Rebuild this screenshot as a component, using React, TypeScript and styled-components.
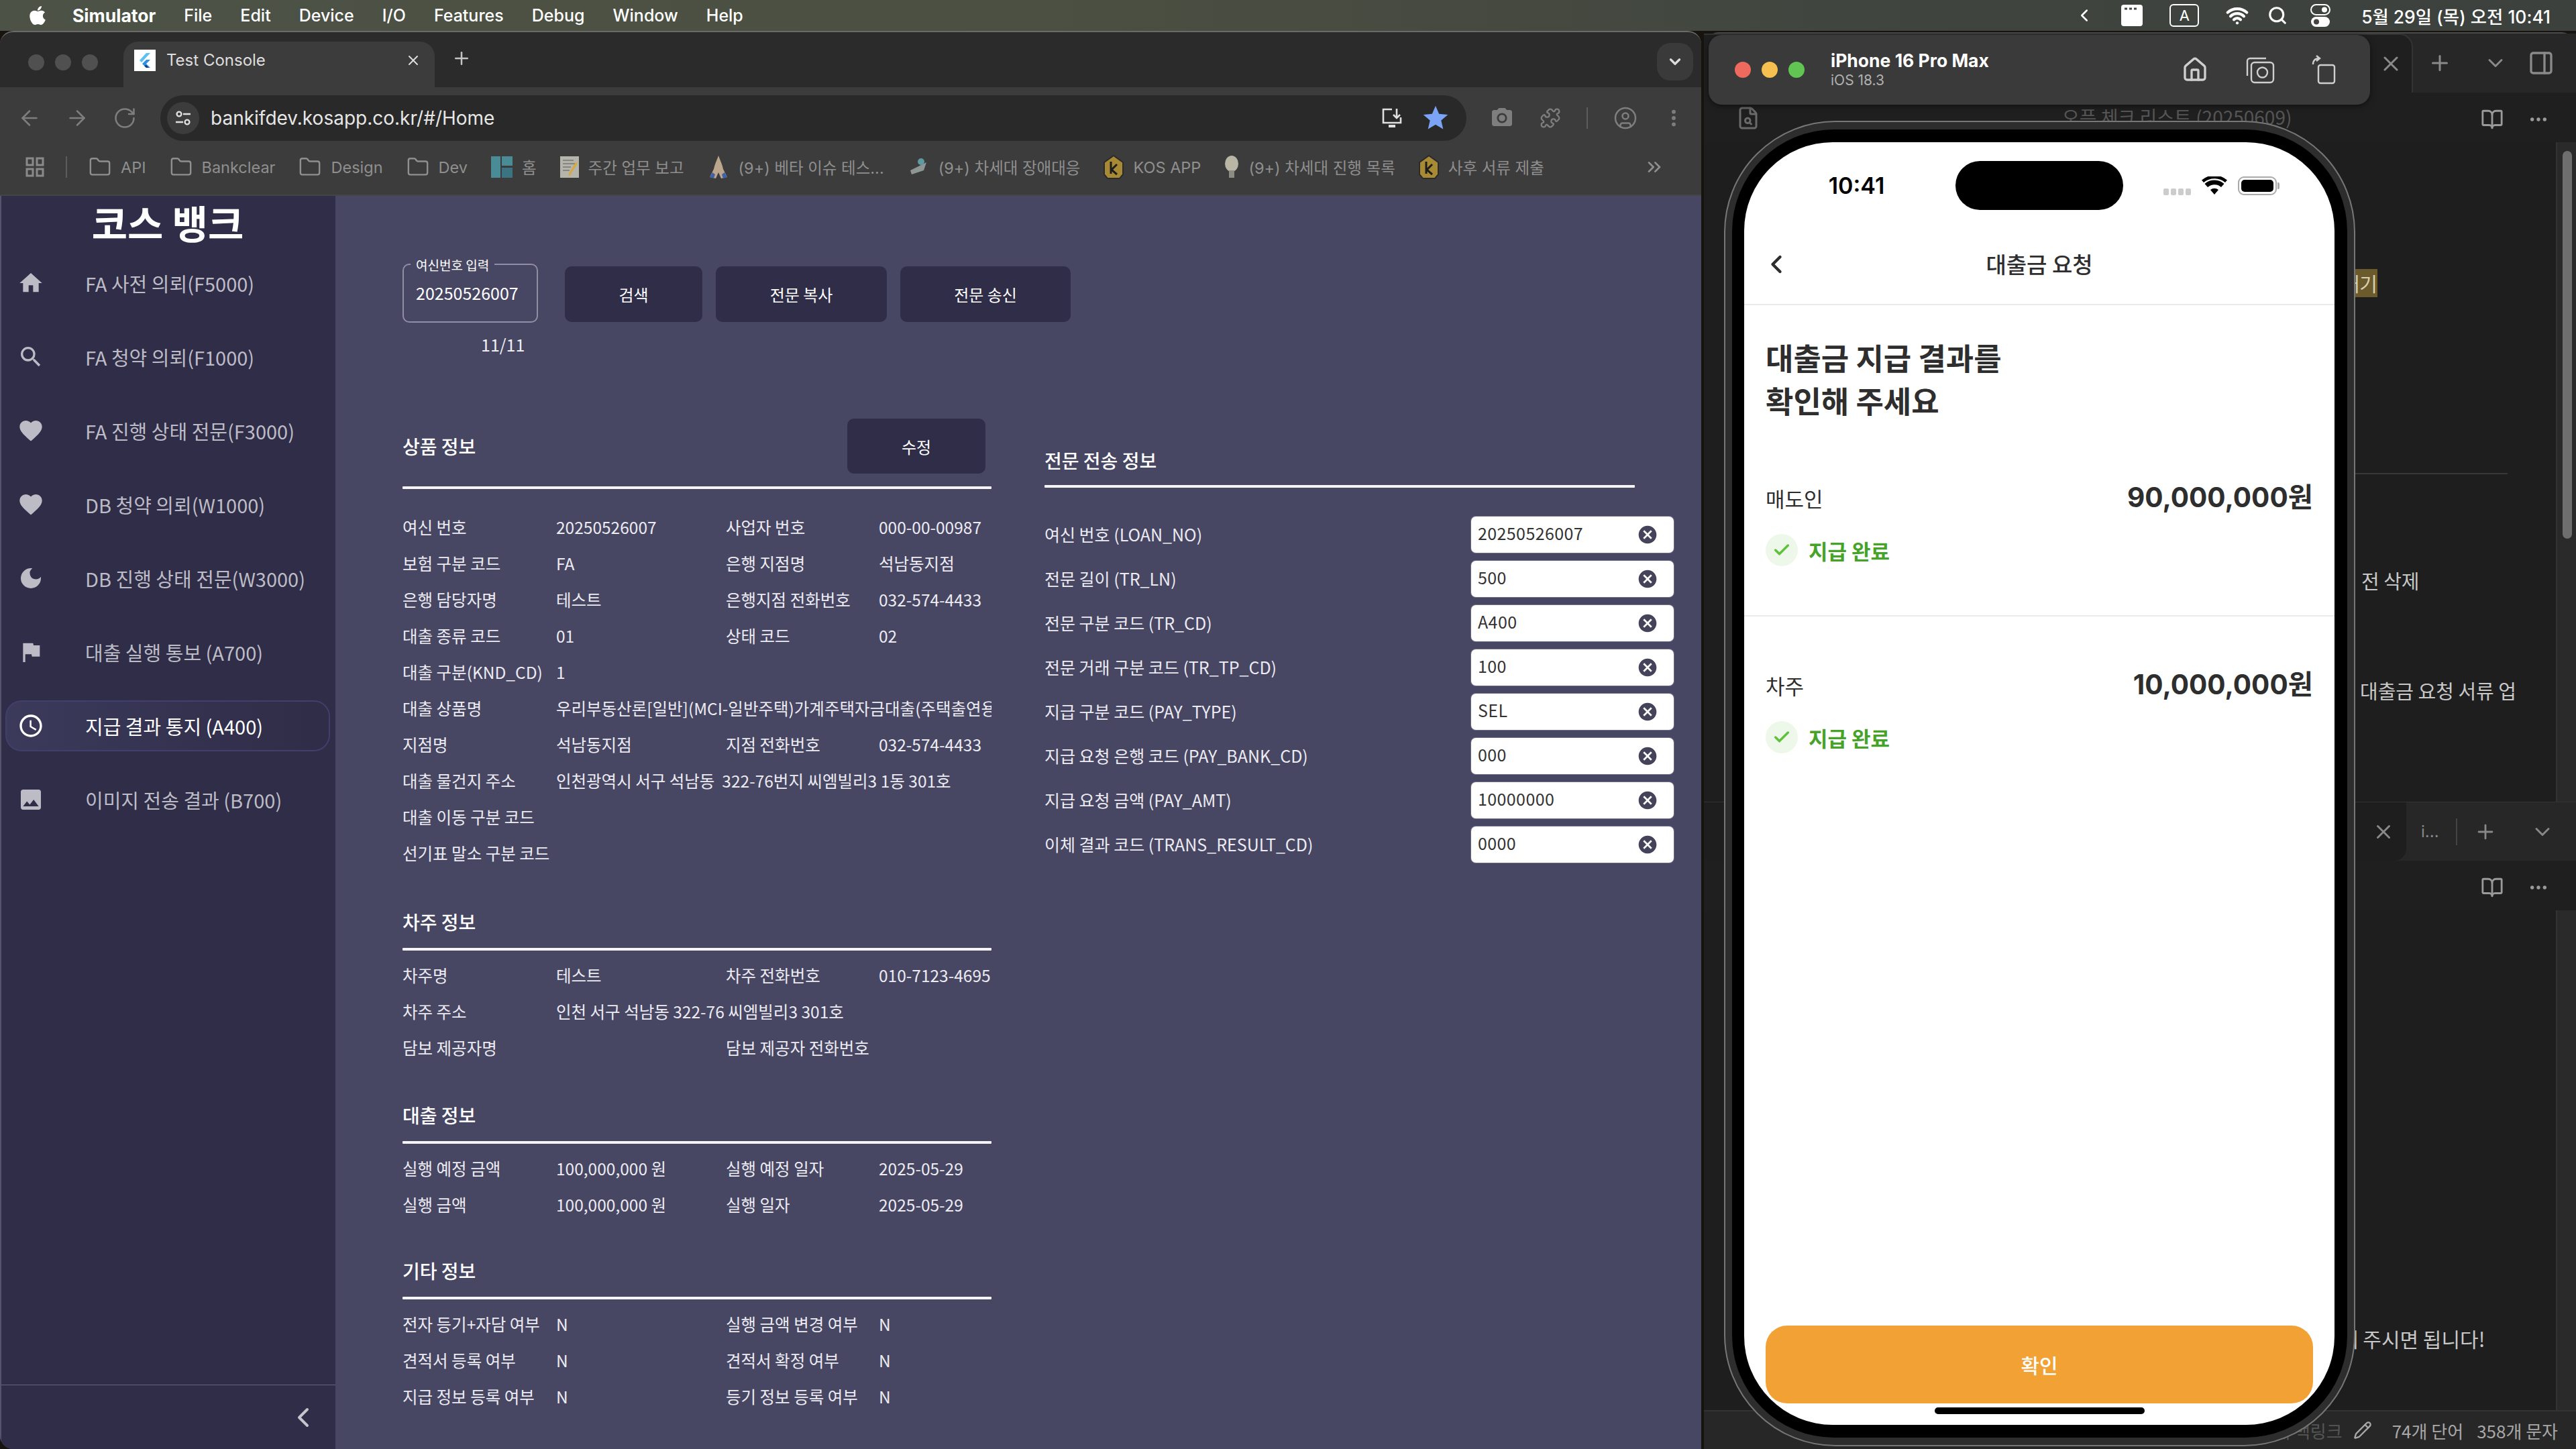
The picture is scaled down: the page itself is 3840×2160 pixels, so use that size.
import React from "react";
import styled, { createGlobalStyle } from "styled-components";
import {
  ArrowLeft, ArrowRight, RotateCw, Folder, Puzzle, CircleUser, EllipsisVertical,
  ChevronLeft, ChevronDown, ChevronsRight, X, Plus, Search, Wifi, BookOpen, Ellipsis,
  PanelRight, Pencil, FileSearch, Home as HomeOutline, Check,
} from "lucide-react";
import { FaApple } from "react-icons/fa";
import {
  MdHome, MdSearch, MdFavorite, MdDarkMode, MdFlag, MdAccessTime, MdImage, MdCancel, MdStar, MdPhotoCamera,
} from "react-icons/md";

const KR = `"Noto Sans CJK KR", "Noto Sans", sans-serif`;
const UI = `Inter, "Noto Sans CJK KR", sans-serif`;

const Global = createGlobalStyle`
  html, body { margin: 0; padding: 0; background: #15120f; }
  * { box-sizing: border-box; }
`;

const Desktop = styled.div`
  position: relative;
  width: 3840px;
  height: 2160px;
  overflow: hidden;
  background: #17130f;
  font-family: ${UI};
`;

/* ---------- mac menu bar ---------- */
const MenuBar = styled.div`
  height: 46px;
  display: flex;
  align-items: center;
  padding: 0 38px 0 40px;
  color: #fff;
  font-size: 25px;
  background: linear-gradient(90deg, #4c5246, #4c5042 40%, #3f443f 75%, #3c413d);
`;
const MenuItem = styled.span<{ $bold?: boolean }>`
  margin-left: ${(p) => (p.$bold ? 36 : 42)}px;
  font-size: ${(p) => (p.$bold ? 26.5 : 25)}px;
  font-weight: ${(p) => (p.$bold ? 700 : 500)};
`;
const MenuRight = styled.div`
  margin-left: auto;
  display: flex;
  align-items: center;
  gap: 40px;
`;
const MenuGlyph = styled.span<{ $r: number }>`
  display: flex;
  margin-right: ${(p) => p.$r}px;
`;
const InputBadge = styled.span`
  width: 44px;
  height: 34px;
  display: flex;
  align-items: center;
  justify-content: center;
  border: 2px solid #fff;
  border-radius: 6px;
  font-size: 22px;
`;
const Clock = styled.span`
  margin-left: 6px;
  font-size: 26.4px;
  font-weight: 500;
`;

/* ---------- chrome window ---------- */
const ChromeWindow = styled.div`
  position: absolute;
  left: 0;
  top: 46px;
  width: 2536px;
  height: 2114px;
  display: flex;
  flex-direction: column;
  overflow: hidden;
  border-radius: 20px 20px 0 20px;
  border-top: 2px solid #6a6a6a;
  background: #2b2b2b;
`;
const TabStrip = styled.div`
  height: 82px;
  flex: none;
  display: flex;
  padding-top: 14px;
`;
const Lights = styled.div`
  width: 184px;
  height: 68px;
  flex: none;
  display: flex;
  align-items: center;
  justify-content: flex-start;
  gap: 16px;
  padding-left: 42px;
  padding-bottom: 6px;
`;
const Light = styled.i<{ $c: string }>`
  width: 24px;
  height: 24px;
  border-radius: 50%;
  background: ${(p) => p.$c};
`;
const Tab = styled.div`
  width: 464px;
  height: 68px;
  display: flex;
  align-items: center;
  padding: 0 20px 13px 16px;
  border-radius: 22px 22px 0 0;
  background: #3c3c3c;
  color: #dedede;
  font-size: 24px;
`;
const Favicon = styled.span`
  width: 32px;
  height: 32px;
  flex: none;
  margin-right: 16px;
  background: #fff;
  display: flex;
`;
const TabTitle = styled.span`
  flex: 1;
`;
const NewTab = styled.span`
  margin: 10px 0 0 25px;
  color: #c4c4c4;
`;
const TabMenu = styled.span`
  margin: 2px 12px 0 auto;
  width: 54px;
  height: 56px;
  border-radius: 20px;
  background: #3a3a3a;
  display: flex;
  align-items: center;
  justify-content: center;
  color: #ddd;
`;
const Toolbar = styled.div`
  height: 92px;
  flex: none;
  display: flex;
  align-items: center;
  padding: 12px 0 12px 26px;
  gap: 35px;
  background: #3c3c3c;
  color: #7e7e7e;
`;
const AddressBar = styled.div`
  width: 1947px;
  height: 68px;
  flex: none;
  display: flex;
  align-items: center;
  padding: 0 24px 0 10px;
  gap: 27px;
  border-radius: 34px;
  background: #292929;
`;
const SitePill = styled.span`
  width: 48px;
  height: 48px;
  flex: none;
  border-radius: 50%;
  background: #3c3c3c;
  display: flex;
  align-items: center;
  justify-content: center;
`;
const Url = styled.span`
  flex: 1;
  margin-left: -10px;
  color: #e6e6e6;
  font-size: 28px;
`;
const ToolGroup = styled.div`
  display: flex;
  align-items: center;
  gap: 38px;
  margin-left: 0;
`;
const ToolSep = styled.i`
  width: 2px;
  height: 32px;
  background: #5c5c5c;
`;
const Bookmarks = styled.div`
  height: 70px;
  flex: none;
  display: flex;
  align-items: center;
  padding: 0 0 14px 38px;
  background: #3c3c3c;
  color: #8f8f8f;
  font-size: 23.5px;
  white-space: nowrap;
  border-bottom: 2px solid #444;
`;
const BookSep = styled.i`
  width: 2px;
  height: 32px;
  margin: 0 32px;
  background: #5c5c5c;
`;
const Bookmark = styled.span`
  display: flex;
  align-items: center;
  gap: 14px;
  margin-right: 35px;
`;
const BookmarkEnd = styled.span`
  margin-left: auto;
  margin-right: 54px;
  display: flex;
`;

/* ---------- test console page ---------- */
const Page = styled.div`
  flex: 1;
  display: flex;
  min-height: 0;
  font-family: ${KR};
  background: #484763;
  color: #eeeef3;
`;
const Sidebar = styled.aside`
  width: 500px;
  flex: none;
  display: flex;
  flex-direction: column;
  background: #2f2d47;
  border-left: 2px solid #55546a;
`;
const Brand = styled.div`
  height: 92px;
  margin-left: -2px;
  flex: none;
  padding-bottom: 14px;
  display: flex;
  align-items: center;
  justify-content: center;
  color: #fff;
  font-size: 58px;
  font-weight: 700;
`;
const NavList = styled.nav`
  display: flex;
  flex-direction: column;
  gap: 34px;
  padding: 0 8px 0 6px;
`;
const NavItem = styled.div<{ $active?: boolean }>`
  height: 76px;
  display: flex;
  align-items: center;
  gap: 61px;
  padding-left: 16px;
  border-radius: 24px;
  border: 2px solid ${(p) => (p.$active ? "#413f6b" : "transparent")};
  background: ${(p) => (p.$active ? "linear-gradient(90deg, #3b3a5b, #2f2d47 95%)" : "transparent")};
  color: ${(p) => (p.$active ? "#fff" : "#bdbcc6")};
  font-size: 29px;
  svg { flex: none; }
`;
const SideFoot = styled.div`
  margin-top: auto;
  height: 96px;
  flex: none;
  display: flex;
  align-items: center;
  justify-content: flex-end;
  padding-right: 24px;
  border-top: 1px solid #66657c;
  color: #c6c5ce;
`;
const Main = styled.main`
  flex: 1;
  min-width: 0;
  padding: 101px 0 0 100px;
`;
const SearchRow = styled.div`
  display: flex;
  height: 88px;
  gap: 20px;
`;
const LoanField = styled.div`
  position: relative;
  width: 202px;
  height: 88px;
  margin-right: 20px;
  display: flex;
  align-items: center;
  padding: 0 0 3px 18px;
  border: 2px solid #8f8ea3;
  border-radius: 10px;
  color: #fff;
  font-size: 25px;
`;
const FieldLegend = styled.span`
  position: absolute;
  left: 10px;
  top: -12px;
  padding: 0 8px;
  background: #484763;
  font-size: 19px;
  line-height: 24px;
`;
const DarkButton = styled.div<{ $w: number; $h?: number; $r?: number }>`
  width: ${(p) => p.$w}px;
  height: ${(p) => p.$h ?? 83}px;
  margin-top: ${(p) => (p.$h ? 0 : 4)}px;
  margin-right: ${(p) => p.$r ?? 0}px;
  display: flex;
  align-items: center;
  justify-content: center;
  border-radius: 10px;
  background: #2f2d47;
  color: #fff;
  font-size: 24px;
`;
const PageCount = styled.div`
  height: 34px;
  margin: 15px 0 94px 117px;
  font-size: 25px;
  line-height: 34px;
`;
const Columns = styled.div`
  display: flex;
  gap: 79px;
  align-items: flex-start;
`;
const LeftCol = styled.div`
  width: 878px;
  flex: none;
`;
const RightCol = styled.div`
  width: 938px;
  flex: none;
`;
const Section = styled.section<{ $top?: number }>`
  margin-top: ${(p) => p.$top ?? 0}px;
`;
const SectionHead = styled.div<{ $h?: number; $end?: boolean; $w?: number }>`
  width: ${(p) => p.$w ?? 878}px;
  ${(p) => (p.$h ? `height: ${p.$h}px;` : "")}
  display: flex;
  align-items: ${(p) => (p.$end ? "flex-end" : "center")};
  justify-content: space-between;
  padding-bottom: ${(p) => (p.$h ? 0 : 21)}px;
  ${(p) => (p.$h ? "margin-bottom: 19px;" : "")}
`;
const Rule = styled.div<{ $w?: number }>`
  width: ${(p) => p.$w ?? 878}px;
  height: 4px;
  border-radius: 1px;
  background: #f5f5f8;
`;
const Heading = styled.h3`
  margin: 0;
  font-size: 28px;
  font-weight: 500;
  line-height: 36px;
  color: #fff;
`;
const Rows = styled.div<{ $top: number }>`
  margin-top: ${(p) => p.$top}px;
`;
const Row = styled.div`
  height: 54px;
  display: grid;
  grid-template-columns: 229px 253px 228px 168px;
  align-items: center;
  padding-bottom: 3px;
  font-size: 24.5px;
  white-space: pre;
  color: #ecebf2;
`;
const Cell = styled.span<{ $span?: number }>`
  overflow: hidden;
  ${(p) => (p.$span ? `grid-column: span ${p.$span};` : "")}
`;
const TelegramRow = styled.div`
  height: 66px;
  display: flex;
  align-items: center;
  justify-content: space-between;
  font-size: 25px;
  color: #ecebf2;
`;
const TelegramLabel = styled.span`
  margin-bottom: 2px;
`;
const TelegramInput = styled.div`
  width: 302px;
  height: 54px;
  display: flex;
  align-items: center;
  justify-content: space-between;
  padding: 0 23px 6px 10px;
  border-radius: 7px;
  background: #fff;
  box-shadow: 0 0 0 1px #6d6c84;
  color: #333;
  font-size: 25px;
  letter-spacing: 0.4px;
  svg { margin-top: 6px; }
`;

/* ---------- obsidian window behind the phone ---------- */
const NotesWindow = styled.div`
  position: absolute;
  left: 2540px;
  top: 48px;
  width: 1300px;
  height: 2112px;
  display: flex;
  flex-direction: column;
  border-radius: 22px 22px 0 0;
  border-top: 2px solid #4a4a4a;
  background: #1e1e1e;
  color: #8a8a8a;
`;
const NotesTabs = styled.div`
  height: 88px;
  flex: none;
  display: flex;
  align-items: center;
  background: #272727;
`;
const NotesActiveTab = styled.div`
  width: 1057px;
  height: 100%;
  flex: none;
  display: flex;
  align-items: center;
  justify-content: flex-end;
  padding-right: 13px;
  background: #1f1f1f;
  border: solid #333;
  border-width: 2px 2px 0 0;
  border-radius: 0 20px 0 0;
`;
const NotesTabTools = styled.div`
  flex: 1;
  display: flex;
  align-items: center;
  padding-left: 22px;
`;
const TabTool = styled.span<{ $l: number }>`
  margin-left: ${(p) => p.$l}px;
  display: flex;
`;
const PaneHead = styled.div<{ $h: number }>`
  height: ${(p) => p.$h}px;
  flex: none;
  position: relative;
  display: flex;
  align-items: center;
  justify-content: flex-end;
  gap: 36px;
  padding: 6px 40px 0 0;
  background: #1f1f1f;
  color: #9a9a9a;
`;
const PaneTitle = styled.span`
  position: absolute;
  left: 534px;
  top: 16px;
  color: #555;
  font-size: 28px;
  font-family: ${KR};
`;
const PaneRail = styled.span`
  position: absolute;
  left: 48px;
  top: 20px;
  color: #6a6a6a;
  display: flex;
`;
const PaneBody = styled.div`
  height: 983px;
  flex: none;
  display: flex;
  background: #1e1e1e;
`;
const NoteText = styled.div`
  flex: 1;
  min-width: 0;
  display: flex;
  flex-direction: column;
  align-items: flex-start;
  font-family: ${KR};
  color: #c8c8c8;
  font-size: 29px;
`;
const Highlight = styled.span`
  margin: 189px 0 0 940px;
  width: 64px;
  height: 42px;
  background: #6b5a2c;
  color: #d8d0b0;
  line-height: 42px;
  text-align: right;
`;
const NoteRule = styled.i`
  width: 228px;
  height: 2px;
  margin: 262px 0 0 970px;
  background: #383838;
`;
const Note = styled.span<{ $top: number; $left: number }>`
  margin: ${(p) => p.$top}px 0 0 ${(p) => p.$left}px;
  line-height: 44px;
  white-space: nowrap;
`;
const ScrollTrack = styled.div`
  width: 30px;
  flex: none;
  padding: 13px 6px 0 8px;
  background: #2a2a2a;
  border-left: 2px solid #333;
`;
const ScrollThumb = styled.div`
  height: 578px;
  border-radius: 8px;
  background: #6e6e6e;
`;
const SecondTabs = styled.div`
  height: 88px;
  flex: none;
  display: flex;
  align-items: center;
  background: #272727;
  border-top: 1px solid #333;
`;
const SecondTab = styled.div`
  width: 1047px;
  height: 100%;
  flex: none;
  display: flex;
  align-items: center;
  justify-content: flex-end;
  padding-right: 17px;
  background: #1e1e1e;
  border-radius: 0 0 18px 0;
`;
const SecondRest = styled.div`
  flex: 1;
  display: flex;
  align-items: center;
  gap: 25px;
  padding-left: 22px;
  color: #888;
  font-size: 24px;
`;
const SecondSep = styled.i`
  width: 2px;
  height: 40px;
  background: #444;
`;
const LowerPane = styled.div`
  flex: 1;
  min-height: 0;
  display: flex;
`;
const LowerBody = styled.div`
  flex: 1;
  min-width: 0;
  display: flex;
  flex-direction: column;
  font-family: ${KR};
  color: #c8c8c8;
  font-size: 30px;
`;
const NotesStatus = styled.div`
  height: 58px;
  flex: none;
  display: flex;
  align-items: center;
  justify-content: flex-end;
  gap: 20px;
  padding-right: 27px;
  background: #272727;
  border-top: 2px solid #333;
  color: #a8a8a8;
  font-family: ${KR};
  font-size: 26px;
`;
const DimCount = styled.span`
  color: #555;
`;
const PencilMark = styled.span`
  display: flex;
  margin: 0 10px 0 -4px;
`;

/* ---------- simulator ---------- */
const SimBar = styled.div`
  position: absolute;
  left: 2547px;
  top: 52px;
  width: 986px;
  height: 104px;
  display: flex;
  align-items: center;
  padding: 0 51px 0 39px;
  border-radius: 20px;
  background: #3a3a3a;
  color: #fff;
  box-shadow: 0 2px 8px #0008;
`;
const SimLights = styled.div`
  display: flex;
  gap: 16px;
  margin-right: 39px;
`;
const SimTitle = styled.div`
  display: flex;
  flex-direction: column;
  font-size: 26.5px;
  font-weight: 700;
  line-height: 32px;
`;
const SimSub = styled.span`
  color: #b0b0b0;
  font-size: 21px;
  font-weight: 400;
  line-height: 28px;
`;
const SimTools = styled.div`
  margin-left: auto;
  display: flex;
  align-items: center;
  gap: 55px;
  color: #cfcfcf;
`;
const PhoneFrame = styled.div`
  position: absolute;
  left: 2570px;
  top: 180px;
  width: 941px;
  height: 1976px;
  padding: 11px 10px;
  border-radius: 166px;
  background: #2d2d2d;
  border: 2px solid #777;
`;
const Bezel = styled.div`
  width: 100%;
  height: 100%;
  padding: 19px 18px;
  border-radius: 152px;
  background: #000;
`;
const Screen = styled.div`
  width: 880px;
  height: 1912px;
  display: flex;
  flex-direction: column;
  overflow: hidden;
  border-radius: 132px;
  background: #fff;
  color: #2e2e2e;
  font-family: ${UI};
`;
const StatusBar = styled.div`
  height: 130px;
  flex: none;
  display: grid;
  grid-template-columns: 315px 250px 315px;
  padding-top: 28px;
`;
const StatusTime = styled.div`
  height: 73px;
  display: flex;
  align-items: center;
  justify-content: center;
  padding-left: 20px;
  color: #000;
  font-size: 34px;
  font-weight: 600;
`;
const Island = styled.div`
  height: 73px;
  border-radius: 37px;
  background: #000;
`;
const StatusIcons = styled.div`
  height: 73px;
  display: flex;
  align-items: center;
  padding-left: 60px;
  gap: 16px;
`;
const SignalDots = styled.span`
  display: flex;
  gap: 3px;
  margin-top: 18px;
`;
const SignalDot = styled.i`
  width: 8px;
  height: 10px;
  border-radius: 2px;
  background: #ccc;
`;
const Battery = styled.span`
  position: relative;
  width: 58px;
  height: 28px;
  padding: 3px;
  border: 2px solid #aaa;
  border-radius: 9px;
  display: flex;
  &::after {
    content: "";
    position: absolute;
    right: -6px;
    top: 7px;
    width: 3px;
    height: 10px;
    border-radius: 0 2px 2px 0;
    background: #aaa;
  }
`;
const BatteryFill = styled.i`
  flex: 1;
  border-radius: 5px;
  background: #000;
`;
const AppBar = styled.div`
  position: relative;
  height: 113px;
  flex: none;
  display: flex;
  align-items: center;
  justify-content: center;
  padding-bottom: 10px;
  border-bottom: 2px solid #e9e9ee;
  font-family: ${KR};
  font-size: 33px;
  font-weight: 500;
`;
const BackChevron = styled.span`
  position: absolute;
  left: 26px;
  top: 30px;
  display: flex;
`;
const Headline = styled.h1`
  margin: 46px 32px 0;
  font-family: ${KR};
  font-size: 45px;
  font-weight: 700;
  line-height: 64px;
`;
const ResultBlock = styled.div<{ $top: number }>`
  margin-top: ${(p) => p.$top}px;
  padding: 0 32px;
`;
const ResultRow = styled.div`
  height: 60px;
  display: flex;
  align-items: center;
  justify-content: space-between;
`;
const PartyName = styled.span`
  font-family: ${KR};
  font-size: 31px;
  margin-top: 4px;
`;
const Amount = styled.span`
  font-size: 40.500px;
  font-weight: 700;
  margin-bottom: 3px;
`;
const Paid = styled.div`
  margin-top: 26px;
  height: 48px;
  display: flex;
  align-items: center;
  gap: 16px;
  color: #46a32a;
  font-family: ${KR};
  font-size: 31px;
  font-weight: 700;
`;
const PaidMark = styled.span`
  width: 48px;
  height: 48px;
  border-radius: 50%;
  background: #eef8ea;
  color: #5fc13c;
  display: flex;
  align-items: center;
  justify-content: center;
`;
const Split = styled.div`
  height: 2px;
  margin-top: 73px;
  background: #ebebee;
`;
const ConfirmButton = styled.div`
  margin: auto 32px 6px;
  height: 116px;
  flex: none;
  display: flex;
  align-items: center;
  justify-content: center;
  border-radius: 32px;
  background: #f2a134;
  color: #fff;
  font-family: ${KR};
  font-size: 30px;
  font-weight: 500;
`;
const HomeBar = styled.div`
  width: 313px;
  height: 10px;
  flex: none;
  margin: 0 auto 16px;
  border-radius: 5px;
  background: #000;
`;

const FlutterMark = () => (
  <svg width="32" height="32" viewBox="0 0 32 32">
    <path d="M18 5 8 16l3 3L24 5z" fill="#5cc0f5" />
    <path d="M18 15l-6 6 6 6h6l-6-6 6-6z" fill="#2f8fe0" />
    <path d="M15 24l3 3h4l-4-4z" fill="#0d3a8a" />
  </svg>
);
const TuneIcon = () => (
  <svg width="28" height="28" viewBox="0 0 28 28" fill="none" stroke="#e0e0e0" strokeWidth="2.4">
    <circle cx="8" cy="8" r="3.4" />
    <path d="M14 8h11M3 20h11" />
    <circle cx="20" cy="20" r="3.4" />
  </svg>
);
const AppsGrid = () => (
  <svg width="28" height="30" viewBox="0 0 28 30" fill="none" stroke="#8a8a8a" strokeWidth="3">
    <rect x="2" y="2" width="9" height="10" />
    <rect x="17" y="2" width="9" height="10" />
    <rect x="2" y="18" width="9" height="10" />
    <rect x="17" y="18" width="9" height="10" />
  </svg>
);
const InstallIcon = () => (
  <svg width="32" height="30" viewBox="0 0 32 30" fill="none" stroke="#e0e0e0" strokeWidth="2.6">
    <path d="M16 2H3v20h26v-8" />
    <path d="M23 1v13M18 10l5 5 5-5" />
    <path d="M11 27h10" strokeWidth="4" />
  </svg>
);
const TealTile = () => (
  <svg width="32" height="32" viewBox="0 0 32 32">
    <rect width="14" height="32" fill="#4a8c96" />
    <rect x="16" width="16" height="14" fill="#4a8c96" />
    <rect x="16" y="17" width="16" height="15" fill="#3b7480" />
  </svg>
);
const MemoTile = () => (
  <svg width="28" height="32" viewBox="0 0 28 32">
    <rect width="28" height="32" fill="#b5b5ac" />
    <path d="M4 6h16M4 11h18M4 16h12M4 21h10" stroke="#777" strokeWidth="1.5" />
    <path d="M26 10 15 28l-3 2 1-4 10-17z" fill="#d8a93a" />
  </svg>
);
const HandsTile = () => (
  <svg width="32" height="36" viewBox="0 0 32 36">
    <path d="M16 1c3 8 6 14 7 20l6 12-9 2-4-9-4 9-9-2 6-12c1-6 4-12 7-20z" fill="#bda68e" />
    <path d="M3 33l4-7 4 3-2 6zM29 33l-4-7-4 3 2 6z" fill="#3f63a8" />
  </svg>
);
const UfoTile = () => (
  <svg width="32" height="30" viewBox="0 0 32 30">
    <path d="M4 20 28 8l-4 12-18 6z" fill="#8d9694" />
    <circle cx="20" cy="7" r="5" fill="#5f9aa0" />
  </svg>
);
const KTile = () => (
  <svg width="30" height="36" viewBox="0 0 30 36">
    <path d="M15 1 29 11v18l-5 6H6l-5-6V11z" fill="#a98a34" stroke="#2b2b2b" strokeWidth="2" />
    <path d="M11 10v18M20 14l-8 8 8 7" stroke="#1d1d1d" strokeWidth="3" fill="none" />
  </svg>
);
const BulbTile = () => (
  <svg width="22" height="34" viewBox="0 0 22 34">
    <ellipse cx="11" cy="12" rx="10" ry="12" fill="#b9b6a6" />
    <rect x="7" y="22" width="8" height="11" fill="#8c8c82" />
  </svg>
);
const CamDouble = () => (
  <svg width="44" height="42" viewBox="0 0 44 42" fill="none" stroke="currentColor" strokeWidth="2.4">
    <path d="M3 30V8a4 4 0 0 1 4-4h24" />
    <rect x="9" y="10" width="33" height="30" rx="5" />
    <circle cx="25.500" cy="25" r="7.500" />
  </svg>
);
const RotateDevice = () => (
  <svg width="36" height="44" viewBox="0 0 36 44" fill="none" stroke="currentColor" strokeWidth="2.4">
    <rect x="10" y="15" width="24" height="27" rx="3" />
    <path d="M2 14c0-6 3-9 9-9M7 1l5 4-5 4" />
  </svg>
);
const ControlPills = () => (
  <svg width="30" height="36" viewBox="0 0 30 36">
    <rect x="1" y="2" width="28" height="15" rx="7.500" fill="none" stroke="#fff" strokeWidth="2" />
    <circle cx="21" cy="9.500" r="4" fill="#fff" />
    <rect x="1" y="20" width="28" height="15" rx="7.500" fill="#fff" />
    <circle cx="9" cy="27.500" r="4" fill="#444" />
  </svg>
);
const KeyTile = () => (
  <svg width="32" height="32" viewBox="0 0 32 32">
    <rect width="32" height="32" rx="4" fill="#fff" />
    <path d="M5 6h4M12 6h4M19 6h4" stroke="#444" strokeWidth="3" />
  </svg>
);
const PhoneWifi = () => (
  <svg width="38" height="28" viewBox="0 0 38 28">
    <path d="M19 27 13 20a9 9 0 0 1 12 0zM9 16 4.500 11a22 22 0 0 1 29 0L29 16a15 15 0 0 0-20 0zM3 9 0 5.500a29 29 0 0 1 38 0L35 9A25 25 0 0 0 3 9z" fill="#000" />
  </svg>
);

const menuItems = ["File", "Edit", "Device", "I/O", "Features", "Debug", "Window", "Help"];

const navItems = [
  { icon: MdHome, label: "FA 사전 의뢰(F5000)" },
  { icon: MdSearch, label: "FA 청약 의뢰(F1000)" },
  { icon: MdFavorite, label: "FA 진행 상태 전문(F3000)" },
  { icon: MdFavorite, label: "DB 청약 의뢰(W1000)" },
  { icon: MdDarkMode, label: "DB 진행 상태 전문(W3000)" },
  { icon: MdFlag, label: "대출 실행 통보 (A700)" },
  { icon: MdAccessTime, label: "지급 결과 통지 (A400)", active: true },
  { icon: MdImage, label: "이미지 전송 결과 (B700)" },
];

const productRows = [
  ["여신 번호", "20250526007", "사업자 번호", "000-00-00987"],
  ["보험 구분 코드", "FA", "은행 지점명", "석남동지점"],
  ["은행 담당자명", "테스트", "은행지점 전화번호", "032-574-4433"],
  ["대출 종류 코드", "01", "상태 코드", "02"],
  ["대출 구분(KND_CD)", "1"],
  ["대출 상품명", "우리부동산론[일반](MCI-일반주택)가계주택자금대출(주택출연용)"],
  ["지점명", "석남동지점", "지점 전화번호", "032-574-4433"],
  ["대출 물건지 주소", "인천광역시 서구 석남동  322-76번지 씨엠빌리3 1동 301호"],
  ["대출 이동 구분 코드"],
  ["선기표 말소 구분 코드"],
];
const borrowerRows = [
  ["차주명", "테스트", "차주 전화번호", "010-7123-4695"],
  ["차주 주소", "인천 서구 석남동 322-76 씨엠빌리3 301호"],
  ["담보 제공자명", "", "담보 제공자 전화번호", ""],
];
const loanRows = [
  ["실행 예정 금액", "100,000,000 원", "실행 예정 일자", "2025-05-29"],
  ["실행 금액", "100,000,000 원", "실행 일자", "2025-05-29"],
];
const etcRows = [
  ["전자 등기+자담 여부", "N", "실행 금액 변경 여부", "N"],
  ["견적서 등록 여부", "N", "견적서 확정 여부", "N"],
  ["지급 정보 등록 여부", "N", "등기 정보 등록 여부", "N"],
];
const telegramRows = [
  ["여신 번호 (LOAN_NO)", "20250526007"],
  ["전문 길이 (TR_LN)", "500"],
  ["전문 구분 코드 (TR_CD)", "A400"],
  ["전문 거래 구분 코드 (TR_TP_CD)", "100"],
  ["지급 구분 코드 (PAY_TYPE)", "SEL"],
  ["지급 요청 은행 코드 (PAY_BANK_CD)", "000"],
  ["지급 요청 금액 (PAY_AMT)", "10000000"],
  ["이체 결과 코드 (TRANS_RESULT_CD)", "0000"],
];

function InfoRows({ rows }: { rows: string[][] }) {
  return (
    <>
      {rows.map((r) => (
        <Row key={r[0]}>
          <Cell>{r[0]}</Cell>
          {r[1] !== undefined && <Cell $span={r.length === 2 ? 3 : undefined}>{r[1]}</Cell>}
          {r[2] !== undefined && <Cell>{r[2]}</Cell>}
          {r[3] !== undefined && <Cell>{r[3]}</Cell>}
        </Row>
      ))}
    </>
  );
}

function PaidStatus() {
  return (
    <Paid>
      <PaidMark><Check size={28} strokeWidth={3} /></PaidMark>
      지급 완료
    </Paid>
  );
}

export default function App() {
  return (
    <Desktop>
      <Global />
      <MenuBar>
        <FaApple size={32} />
        <MenuItem $bold>Simulator</MenuItem>
        {menuItems.map((m) => <MenuItem key={m}>{m}</MenuItem>)}
        <MenuRight>
          <ChevronLeft size={30} />
          <KeyTile />
          <InputBadge>A</InputBadge>
          <MenuGlyph $r={-12}><Wifi size={34} strokeWidth={3} /></MenuGlyph>
          <MenuGlyph $r={-6}><Search size={30} strokeWidth={2.5} /></MenuGlyph>
          <ControlPills />
          <Clock>5월 29일 (목) 오전 10:41</Clock>
        </MenuRight>
      </MenuBar>

      <NotesWindow>
        <NotesTabs>
          <NotesActiveTab><X size={36} /></NotesActiveTab>
          <NotesTabTools>
            <TabTool $l={0}><Plus size={36} /></TabTool>
            <TabTool $l={47}><ChevronDown size={36} /></TabTool>
            <TabTool $l={30}><PanelRight size={40} /></TabTool>
          </NotesTabTools>
        </NotesTabs>
        <PaneHead $h={74}>
          <PaneRail><FileSearch size={36} /></PaneRail>
          <PaneTitle>오픈 체크 리스트 (20250609)</PaneTitle>
          <BookOpen size={34} />
          <Ellipsis size={32} />
        </PaneHead>
        <PaneBody>
          <NoteText>
            <Highlight>대기</Highlight>
            <NoteRule />
            <Note $top={136} $left={980}>전 삭제</Note>
            <Note $top={120} $left={978}>대출금 요청 서류 업</Note>
          </NoteText>
          <ScrollTrack><ScrollThumb /></ScrollTrack>
        </PaneBody>
        <SecondTabs>
          <SecondTab><X size={34} /></SecondTab>
          <SecondRest>
            <span>i...</span>
            <SecondSep />
            <Plus size={34} />
            <TabTool $l={25}><ChevronDown size={36} /></TabTool>
          </SecondRest>
        </SecondTabs>
        <PaneHead $h={74}>
          <BookOpen size={34} />
          <Ellipsis size={32} />
        </PaneHead>
        <LowerPane>
          <LowerBody>
            <Note $top={616} $left={948}>해 주시면 됩니다!</Note>
          </LowerBody>
          <ScrollTrack />
        </LowerPane>
        <NotesStatus>
          <DimCount>0개 백링크</DimCount>
          <PencilMark><Pencil size={28} /></PencilMark>
          <span>74개 단어</span>
          <span>358개 문자</span>
        </NotesStatus>
      </NotesWindow>

      <ChromeWindow>
        <TabStrip>
          <Lights>
            <Light $c="#505050" />
            <Light $c="#505050" />
            <Light $c="#505050" />
          </Lights>
          <Tab>
            <Favicon><FlutterMark /></Favicon>
            <TabTitle>Test Console</TabTitle>
            <X size={24} />
          </Tab>
          <NewTab><Plus size={30} /></NewTab>
          <TabMenu><ChevronDown size={26} strokeWidth={3} /></TabMenu>
        </TabStrip>
        <Toolbar>
          <ArrowLeft size={36} strokeWidth={1.7} />
          <ArrowRight size={36} strokeWidth={1.7} />
          <RotateCw size={36} strokeWidth={1.7} />
          <AddressBar>
            <SitePill><TuneIcon /></SitePill>
            <Url>bankifdev.kosapp.co.kr/#/Home</Url>
            <InstallIcon />
            <MdStar size={44} color="#7ba4f6" />
          </AddressBar>
          <ToolGroup>
            <MdPhotoCamera size={36} />
            <Puzzle size={32} strokeWidth={1.7} />
            <ToolSep />
            <CircleUser size={36} strokeWidth={1.7} />
            <EllipsisVertical size={32} strokeWidth={2.4} />
          </ToolGroup>
        </Toolbar>
        <Bookmarks>
          <AppsGrid />
          <BookSep />
          <Bookmark><Folder size={34} strokeWidth={1.7} />API</Bookmark>
          <Bookmark><Folder size={34} strokeWidth={1.7} />Bankclear</Bookmark>
          <Bookmark><Folder size={34} strokeWidth={1.7} />Design</Bookmark>
          <Bookmark><Folder size={34} strokeWidth={1.7} />Dev</Bookmark>
          <Bookmark><TealTile />홈</Bookmark>
          <Bookmark><MemoTile />주간 업무 보고</Bookmark>
          <Bookmark><HandsTile />(9+) 베타 이슈 테스...</Bookmark>
          <Bookmark><UfoTile />(9+) 차세대 장애대응</Bookmark>
          <Bookmark><KTile />KOS APP</Bookmark>
          <Bookmark><BulbTile />(9+) 차세대 진행 목록</Bookmark>
          <Bookmark><KTile />사후 서류 제출</Bookmark>
          <BookmarkEnd><ChevronsRight size={32} /></BookmarkEnd>
        </Bookmarks>
        <Page>
          <Sidebar>
            <Brand>코스 뱅크</Brand>
            <NavList>
              {navItems.map(({ icon: Icon, label, active }) => (
                <NavItem key={label} $active={active}>
                  <Icon size={40} />
                  {label}
                </NavItem>
              ))}
            </NavList>
            <SideFoot><ChevronLeft size={48} strokeWidth={2} /></SideFoot>
          </Sidebar>
          <Main>
            <SearchRow>
              <LoanField>
                <FieldLegend>여신번호 입력</FieldLegend>
                20250526007
              </LoanField>
              <DarkButton $w={205}>검색</DarkButton>
              <DarkButton $w={255}>전문 복사</DarkButton>
              <DarkButton $w={254}>전문 송신</DarkButton>
            </SearchRow>
            <PageCount>11/11</PageCount>
            <Columns>
              <LeftCol>
                <Section>
                  <SectionHead $h={82}>
                    <Heading>상품 정보</Heading>
                    <DarkButton $w={206} $h={82} $r={9}>수정</DarkButton>
                  </SectionHead>
                  <Rule />
                  <Rows $top={31}><InfoRows rows={productRows} /></Rows>
                </Section>
                <Section $top={56}>
                  <SectionHead><Heading>차주 정보</Heading></SectionHead>
                  <Rule />
                  <Rows $top={11}><InfoRows rows={borrowerRows} /></Rows>
                </Section>
                <Section $top={54}>
                  <SectionHead><Heading>대출 정보</Heading></SectionHead>
                  <Rule />
                  <Rows $top={11}><InfoRows rows={loanRows} /></Rows>
                </Section>
                <Section $top={52}>
                  <SectionHead><Heading>기타 정보</Heading></SectionHead>
                  <Rule />
                  <Rows $top={11}><InfoRows rows={etcRows} /></Rows>
                </Section>
              </LeftCol>
              <RightCol>
                <Section>
                  <SectionHead $h={80} $end $w={880}><Heading>전문 전송 정보</Heading></SectionHead>
                  <Rule $w={880} />
                  <Rows $top={37}>
                    {telegramRows.map(([label, value]) => (
                      <TelegramRow key={label}>
                        <TelegramLabel>{label}</TelegramLabel>
                        <TelegramInput>
                          {value}
                          <MdCancel size={32} color="#44435a" />
                        </TelegramInput>
                      </TelegramRow>
                    ))}
                  </Rows>
                </Section>
              </RightCol>
            </Columns>
          </Main>
        </Page>
      </ChromeWindow>

      <SimBar>
        <SimLights>
          <Light $c="#ee6a5f" />
          <Light $c="#f5c04f" />
          <Light $c="#61c554" />
        </SimLights>
        <SimTitle>
          iPhone 16 Pro Max
          <SimSub>iOS 18.3</SimSub>
        </SimTitle>
        <SimTools>
          <HomeOutline size={40} strokeWidth={2} />
          <CamDouble />
          <RotateDevice />
        </SimTools>
      </SimBar>

      <PhoneFrame>
        <Bezel>
          <Screen>
            <StatusBar>
              <StatusTime>10:41</StatusTime>
              <Island />
              <StatusIcons>
                <SignalDots>
                  <SignalDot /><SignalDot /><SignalDot /><SignalDot />
                </SignalDots>
                <PhoneWifi />
                <Battery><BatteryFill /></Battery>
              </StatusIcons>
            </StatusBar>
            <AppBar>
              <BackChevron><ChevronLeft size={44} strokeWidth={2.4} /></BackChevron>
              대출금 요청
            </AppBar>
            <Headline>대출금 지급 결과를<br />확인해 주세요</Headline>
            <ResultBlock $top={81}>
              <ResultRow>
                <PartyName>매도인</PartyName>
                <Amount>90,000,000원</Amount>
              </ResultRow>
              <PaidStatus />
            </ResultBlock>
            <Split />
            <ResultBlock $top={70}>
              <ResultRow>
                <PartyName>차주</PartyName>
                <Amount>10,000,000원</Amount>
              </ResultRow>
              <PaidStatus />
            </ResultBlock>
            <ConfirmButton>확인</ConfirmButton>
            <HomeBar />
          </Screen>
        </Bezel>
      </PhoneFrame>
    </Desktop>
  );
}
